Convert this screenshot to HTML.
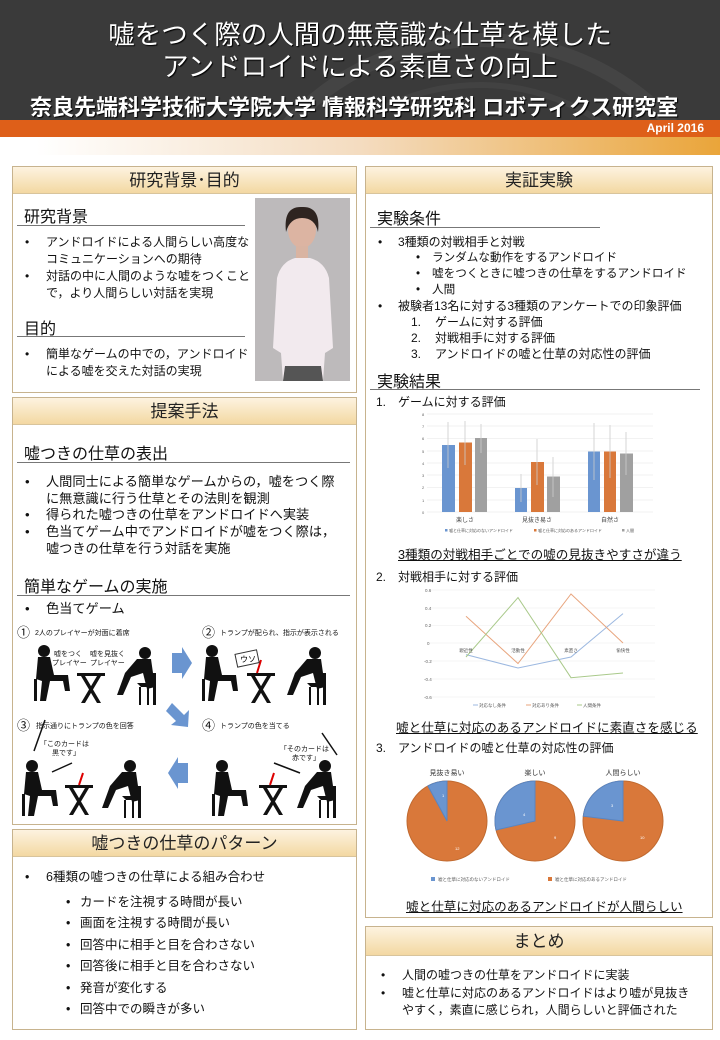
<!DOCTYPE html>
<html><head><meta charset="utf-8"><style>
*{margin:0;padding:0;box-sizing:border-box}
body{width:720px;height:1040px;position:relative;background:#fff;font-family:"Liberation Sans","Noto Sans CJK JP",sans-serif;color:#111;overflow:hidden}
.a{position:absolute;white-space:nowrap}
.hdr{position:absolute;left:0;top:0;width:720px;height:120px;background:#3a3a3a}
.box{position:absolute;border:1px solid #c7b38e;background:#fff}
.bh{position:absolute;left:0;top:0;right:0;height:27px;background:linear-gradient(#fdf3e0,#f3d8a2);border-bottom:1px solid #d8c49c;text-align:center;font-size:17px;line-height:27px;color:#222}
.ln{position:absolute;height:1px;background:#777}
.t{font-size:12.5px;line-height:16.5px}
.s{font-size:12px;line-height:16.5px}
.m{font-size:13.2px;line-height:16.5px}
</style></head><body>
<div class="hdr"></div>
<svg class="a" style="left:0;top:0" width="720" height="120"><circle cx="480" cy="300" r="260" fill="none" stroke="#444" stroke-width="14"/><circle cx="480" cy="300" r="215" fill="none" stroke="#424242" stroke-width="6"/></svg>
<div class="a" style="left:0;width:720px;top:19px;text-align:center;color:#fff;font-size:26.5px;line-height:32px;text-shadow:1px 1px 1px #000">嘘をつく際の人間の無意識な仕草を模した<br>アンドロイドによる素直さの向上</div>
<div class="a" style="left:30px;top:90px;color:#fff;font-size:22px;font-weight:bold;text-shadow:1px 1px 1px #000">奈良先端科学技術大学院大学 情報科学研究科 ロボティクス研究室</div>
<div class="a" style="left:0;top:120px;width:720px;height:17px;background:#de5f19"></div>
<div class="a" style="right:16px;top:121px;color:#fff;font-size:12px;font-weight:bold">April 2016</div>
<div class="a" style="left:0;top:137px;width:720px;height:18px;background:linear-gradient(90deg,#fff 5%,#f4dcc0 50%,#eaa53a)"></div>

<!-- Left box 1 -->
<div class="box" style="left:12px;top:166px;width:345px;height:227px"><div class="bh">研究背景･目的</div></div>
<div class="a" style="left:24px;top:203px;font-size:16px">研究背景</div>
<div class="ln" style="left:17px;top:225px;width:228px"></div>
<div class="a s" style="left:25px;top:234px">•</div>
<div class="a s" style="left:46px;top:234px">アンドロイドによる人間らしい高度な<br>コミュニケーションへの期待</div>
<div class="a s" style="left:25px;top:268px">•</div>
<div class="a s" style="left:46px;top:268px">対話の中に人間のような嘘をつくこと<br>で，より人間らしい対話を実現</div>
<div class="a" style="left:24px;top:315px;font-size:16px">目的</div>
<div class="ln" style="left:17px;top:336px;width:228px"></div>
<div class="a s" style="left:25px;top:346px">•</div>
<div class="a s" style="left:46px;top:346px">簡単なゲームの中での，アンドロイド<br>による嘘を交えた対話の実現</div>
<svg class="a" style="left:255px;top:198px" width="95" height="183"><rect width="95" height="183" fill="#bdbabb"/><path d="M22 80 Q26 64 40 60 L55 60 Q70 64 74 80 L78 150 L70 155 L68 183 L28 183 L26 155 L18 150 Z" fill="#f2eaee"/><path d="M28 183 L30 168 L66 168 L68 183Z" fill="#555"/><ellipse cx="47" cy="32" rx="14" ry="18" fill="#dcb4a2"/><path d="M31 34 Q28 8 47 9 Q66 8 63 34 Q60 20 47 20 Q35 20 31 34Z" fill="#2e2420"/><rect x="41" y="48" width="12" height="12" fill="#d9b4a2"/></svg>

<!-- Left box 2 -->
<div class="box" style="left:12px;top:397px;width:345px;height:428px"><div class="bh">提案手法</div></div>
<div class="a" style="left:24px;top:440px;font-size:16px">嘘つきの仕草の表出</div>
<div class="ln" style="left:17px;top:462px;width:333px"></div>
<div class="a m" style="left:25px;top:474px">•</div>
<div class="a m" style="left:46px;top:474px">人間同士による簡単なゲームからの，嘘をつく際<br>に無意識に行う仕草とその法則を観測</div>
<div class="a m" style="left:25px;top:507px">•</div>
<div class="a m" style="left:46px;top:507px">得られた嘘つきの仕草をアンドロイドへ実装</div>
<div class="a m" style="left:25px;top:524px">•</div>
<div class="a m" style="left:46px;top:524px">色当てゲーム中でアンドロイドが嘘をつく際は，<br>嘘つきの仕草を行う対話を実施</div>
<div class="a" style="left:24px;top:573px;font-size:16px">簡単なゲームの実施</div>
<div class="ln" style="left:17px;top:595px;width:333px"></div>
<div class="a m" style="left:25px;top:601px">•</div>
<div class="a m" style="left:46px;top:601px">色当てゲーム</div>
<svg class="a" style="left:12px;top:615px" width="345" height="205" font-family="Liberation Sans,Noto Sans CJK JP,sans-serif">
<defs>
<g id="pl"><circle cx="10" cy="6" r="6"/><path d="M4 12 L16 12 L20 30 L34 30 L36 46 L31 46 L29 36 L16 36 L12 56 L6 56 L8 36 L2 34 Z"/><rect x="0" y="34" width="3" height="22"/></g>
<g id="pr"><circle cx="28" cy="6" r="6"/><path d="M20 12 L34 12 L38 40 L30 42 L26 26 L14 30 L6 48 L0 48 L8 26 Z"/><path d="M20 36 L38 36 L38 40 L24 40Z"/><rect x="36" y="26" width="3" height="32"/><rect x="22" y="40" width="2" height="18"/><rect x="30" y="40" width="2" height="18"/></g>
<g id="tb"><rect x="0" y="0" width="28" height="3"/><path d="M4 3 L8 3 L24 30 L20 30Z M20 3 L24 3 L8 30 L4 30Z"/></g>
</defs>
<g fill="#111">
<use href="#pl" x="22" y="30"/><use href="#tb" x="65" y="58"/><use href="#pr" x="105" y="32"/>
<use href="#pl" x="190" y="30"/><use href="#tb" x="235" y="58"/><use href="#pr" x="275" y="32"/>
<use href="#pl" x="10" y="145"/><use href="#tb" x="53" y="170"/><use href="#pr" x="90" y="145"/>
<use href="#pl" x="200" y="145"/><use href="#tb" x="247" y="170"/><use href="#pr" x="285" y="145"/>
</g>
<g stroke="#d00" stroke-width="2"><line x1="245" y1="58" x2="249" y2="45"/><line x1="67" y1="170" x2="71" y2="158"/><line x1="258" y1="170" x2="262" y2="158"/></g>
<g stroke="#111" stroke-width="1.5"><line x1="22" y1="136" x2="33" y2="105"/><line x1="40" y1="157" x2="60" y2="148"/><line x1="310" y1="118" x2="325" y2="140"/><line x1="262" y1="148" x2="288" y2="158"/></g>
<rect x="224" y="37" width="22" height="13" fill="#fff" stroke="#333" transform="rotate(-12 235 43)"/><text x="228" y="47" font-size="8">ウソ</text>
<g fill="#6a95d0"><path d="M160 38 L170 38 L170 32 L180 48 L170 64 L170 58 L160 58Z"/><path d="M160 88 L172 100 L177 95 L176 112 L159 110 L164 106 L154 96Z"/><path d="M176 148 L166 148 L166 142 L156 158 L166 174 L166 168 L176 168Z"/></g>
<g font-size="7" fill="#111"><text x="5" y="22" font-size="13">①</text><text x="23" y="20">2人のプレイヤーが対面に着席</text>
<text x="190" y="22" font-size="13">②</text><text x="208" y="20">トランプが配られ、指示が表示される</text>
<text x="5" y="115" font-size="13">③</text><text x="24" y="113">指示通りにトランプの色を回答</text>
<text x="190" y="115" font-size="13">④</text><text x="208" y="113">トランプの色を当てる</text>
<text x="42" y="41">嘘をつく</text><text x="40" y="50">プレイヤー</text><text x="78" y="41">嘘を見抜く</text><text x="78" y="50">プレイヤー</text>
<text x="28" y="131">「このカードは</text><text x="40" y="140">黒です」</text>
<text x="268" y="136">「そのカードは</text><text x="280" y="145">赤です」</text></g>
</svg>

<!-- Left box 3 -->
<div class="box" style="left:12px;top:829px;width:345px;height:201px"><div class="bh">嘘つきの仕草のパターン</div></div>
<div class="a t" style="left:25px;top:869px">•</div>
<div class="a t" style="left:46px;top:869px">6種類の嘘つきの仕草による組み合わせ</div>
<div class="a t" style="left:66px;top:892px;line-height:21.4px">•<br>•<br>•<br>•<br>•<br>•</div>
<div class="a t" style="left:80px;top:892px;line-height:21.4px">カードを注視する時間が長い<br>画面を注視する時間が長い<br>回答中に相手と目を合わさない<br>回答後に相手と目を合わさない<br>発音が変化する<br>回答中での瞬きが多い</div>

<!-- Right box -->
<div class="box" style="left:365px;top:166px;width:348px;height:752px"><div class="bh">実証実験</div></div>
<div class="a" style="left:377px;top:205px;font-size:16px">実験条件</div>
<div class="ln" style="left:370px;top:227px;width:230px"></div>
<div class="a s" style="left:378px;top:234px;line-height:16px">•<br><br><br><br>•</div>
<div class="a s" style="left:398px;top:234px;line-height:16px">3種類の対戦相手と対戦<br><br><br><br>被験者13名に対する3種類のアンケートでの印象評価</div>
<div class="a s" style="left:416px;top:250px;line-height:16px;font-size:11.6px">•<br>•<br>•</div>
<div class="a s" style="left:432px;top:250px;line-height:16px;font-size:11.6px">ランダムな動作をするアンドロイド<br>嘘をつくときに嘘つきの仕草をするアンドロイド<br>人間</div>
<div class="a s" style="left:411px;top:314px;line-height:16px">1.<br>2.<br>3.</div>
<div class="a s" style="left:435px;top:314px;line-height:16px">ゲームに対する評価<br>対戦相手に対する評価<br>アンドロイドの嘘と仕草の対応性の評価</div>
<div class="a" style="left:377px;top:368px;font-size:16px">実験結果</div>
<div class="ln" style="left:370px;top:389px;width:330px"></div>
<div class="a s" style="left:376px;top:394px">1.　ゲームに対する評価</div>
<svg class="a" style="left:365px;top:405px" width="348" height="140" font-family="Liberation Sans,Noto Sans CJK JP,sans-serif">
<g stroke="#e6e6e6" stroke-width="0.6"><line x1="62" y1="9" x2="288" y2="9"/><line x1="62" y1="21" x2="288" y2="21"/><line x1="62" y1="33.5" x2="288" y2="33.5"/><line x1="62" y1="46" x2="288" y2="46"/><line x1="62" y1="58" x2="288" y2="58"/><line x1="62" y1="70" x2="288" y2="70"/><line x1="62" y1="82.5" x2="288" y2="82.5"/><line x1="62" y1="95" x2="288" y2="95"/><line x1="62" y1="107" x2="288" y2="107"/></g>
<g font-size="4" fill="#666"><text x="57" y="11">8</text><text x="57" y="23">7</text><text x="57" y="35">6</text><text x="57" y="48">5</text><text x="57" y="60">4</text><text x="57" y="72">3</text><text x="57" y="84">2</text><text x="57" y="97">1</text><text x="57" y="109">0</text></g>
<rect x="77" y="40" width="13" height="67" fill="#6a95d0"/><rect x="94" y="37.5" width="13" height="69.5" fill="#d9783a"/><rect x="110" y="33" width="12" height="74" fill="#a0a0a0"/>
<rect x="150" y="83" width="12" height="24" fill="#6a95d0"/><rect x="166" y="57" width="13" height="50" fill="#d9783a"/><rect x="182" y="71.5" width="13" height="35.5" fill="#a0a0a0"/>
<rect x="223" y="46.5" width="12" height="60.5" fill="#6a95d0"/><rect x="239" y="46.5" width="12" height="60.5" fill="#d9783a"/><rect x="255" y="48.5" width="13" height="58.5" fill="#a0a0a0"/>
<g stroke="#ccc" stroke-width="0.8"><line x1="83" y1="17" x2="83" y2="63"/><line x1="100" y1="16" x2="100" y2="60"/><line x1="116" y1="19" x2="116" y2="48"/><line x1="156" y1="69" x2="156" y2="97"/><line x1="172" y1="34" x2="172" y2="80"/><line x1="188" y1="52" x2="188" y2="92"/><line x1="229" y1="18" x2="229" y2="75"/><line x1="245" y1="20" x2="245" y2="73"/><line x1="261" y1="27" x2="261" y2="70"/></g>
<g font-size="6" fill="#444" text-anchor="middle"><text x="100" y="117">楽しさ</text><text x="172" y="117">見抜き易さ</text><text x="245" y="117">自然さ</text></g>
<g font-size="4" fill="#555"><rect x="80" y="124" width="2.5" height="2.5" fill="#6a95d0"/><text x="84" y="127">嘘と仕草に対応のないアンドロイド</text><rect x="169" y="124" width="2.5" height="2.5" fill="#d9783a"/><text x="173" y="127">嘘と仕草に対応のあるアンドロイド</text><rect x="257" y="124" width="2.5" height="2.5" fill="#a0a0a0"/><text x="261" y="127">人間</text></g>
</svg>
<div class="a" style="left:398px;top:544px;font-size:12.6px;text-decoration:underline">3種類の対戦相手ごとでの嘘の見抜きやすさが違う</div>
<div class="a s" style="left:376px;top:569px">2.　対戦相手に対する評価</div>
<svg class="a" style="left:365px;top:580px" width="348" height="135" font-family="Liberation Sans,Noto Sans CJK JP,sans-serif">
<g stroke="#eee" stroke-width="0.6"><line x1="65" y1="10" x2="290" y2="10"/><line x1="65" y1="28" x2="290" y2="28"/><line x1="65" y1="45.5" x2="290" y2="45.5"/><line x1="65" y1="63" x2="290" y2="63"/><line x1="65" y1="81" x2="290" y2="81"/><line x1="65" y1="99" x2="290" y2="99"/><line x1="65" y1="117" x2="290" y2="117"/></g>
<g font-size="4.5" fill="#666"><text x="60" y="12">0.6</text><text x="60" y="30">0.4</text><text x="60" y="47">0.2</text><text x="62" y="65">0</text><text x="59" y="83">-0.2</text><text x="59" y="101">-0.4</text><text x="59" y="119">-0.6</text></g>
<g fill="none" stroke-width="1"><polyline points="101,74.6 153,88 206,77 258,33.6" stroke="#9cb8e0"/><polyline points="101,36.3 153,83.5 206,14 258,63" stroke="#e8a57e"/><polyline points="101,77 153,17.6 206,97.7 258,93" stroke="#a9c98a"/></g>
<g font-size="4.5" fill="#555" text-anchor="middle"><text x="101" y="72">親近性</text><text x="153" y="72">活動性</text><text x="206" y="72">素直さ</text><text x="258" y="72">愉快性</text></g>
<g font-size="4.5" fill="#555"><line x1="108" y1="125" x2="113" y2="125" stroke="#9cb8e0"/><text x="114" y="127">対応なし条件</text><line x1="161" y1="125" x2="166" y2="125" stroke="#e8a57e"/><text x="167" y="127">対応あり条件</text><line x1="212" y1="125" x2="217" y2="125" stroke="#a9c98a"/><text x="218" y="127">人間条件</text></g>
</svg>
<div class="a" style="left:396px;top:717px;font-size:12.6px;text-decoration:underline">嘘と仕草に対応のあるアンドロイドに素直さを感じる</div>
<div class="a s" style="left:376px;top:740px">3.　アンドロイドの嘘と仕草の対応性の評価</div>
<svg class="a" style="left:365px;top:760px" width="348" height="130" font-family="Liberation Sans,Noto Sans CJK JP,sans-serif">
<g font-size="7" fill="#333" text-anchor="middle"><text x="82" y="15">見抜き易い</text><text x="170" y="15">楽しい</text><text x="258" y="15">人間らしい</text></g>
<g stroke="#c06a30" stroke-width="1">
<circle cx="82" cy="61" r="40" fill="#d9783a"/><path d="M82 61 L82 21 A40 40 0 0 0 62.9 25.9Z" fill="#6a95d0" stroke="#5a85c0"/>
<circle cx="170" cy="61" r="40" fill="#d9783a"/><path d="M170 61 L170 21 A40 40 0 0 0 131 70Z" fill="#6a95d0" stroke="#5a85c0"/>
<circle cx="258" cy="61" r="40" fill="#d9783a"/><path d="M258 61 L258 21 A40 40 0 0 0 218.3 56.2Z" fill="#6a95d0" stroke="#5a85c0"/></g>
<g font-size="4" fill="#fff"><text x="77" y="37">1</text><text x="90" y="90">12</text><text x="158" y="56">4</text><text x="189" y="79">9</text><text x="246" y="47">3</text><text x="275" y="79">10</text></g>
<g font-size="4.5" fill="#555"><rect x="66" y="117" width="4" height="4" fill="#6a95d0"/><text x="73" y="121">嘘と仕草に対応のないアンドロイド</text><rect x="183" y="117" width="4" height="4" fill="#d9783a"/><text x="190" y="121">嘘と仕草に対応のあるアンドロイド</text></g>
</svg>
<div class="a" style="left:406px;top:896px;font-size:12.6px;text-decoration:underline">嘘と仕草に対応のあるアンドロイドが人間らしい</div>

<!-- まとめ -->
<div class="box" style="left:365px;top:926px;width:348px;height:104px"><div class="bh" style="height:29px;line-height:29px">まとめ</div></div>
<div class="a s" style="left:381px;top:967px">•</div>
<div class="a s" style="left:402px;top:967px">人間の嘘つきの仕草をアンドロイドに実装</div>
<div class="a s" style="left:381px;top:985px">•</div>
<div class="a s" style="left:402px;top:985px">嘘と仕草に対応のあるアンドロイドはより嘘が見抜き<br>やすく，素直に感じられ，人間らしいと評価された</div>
</body></html>
